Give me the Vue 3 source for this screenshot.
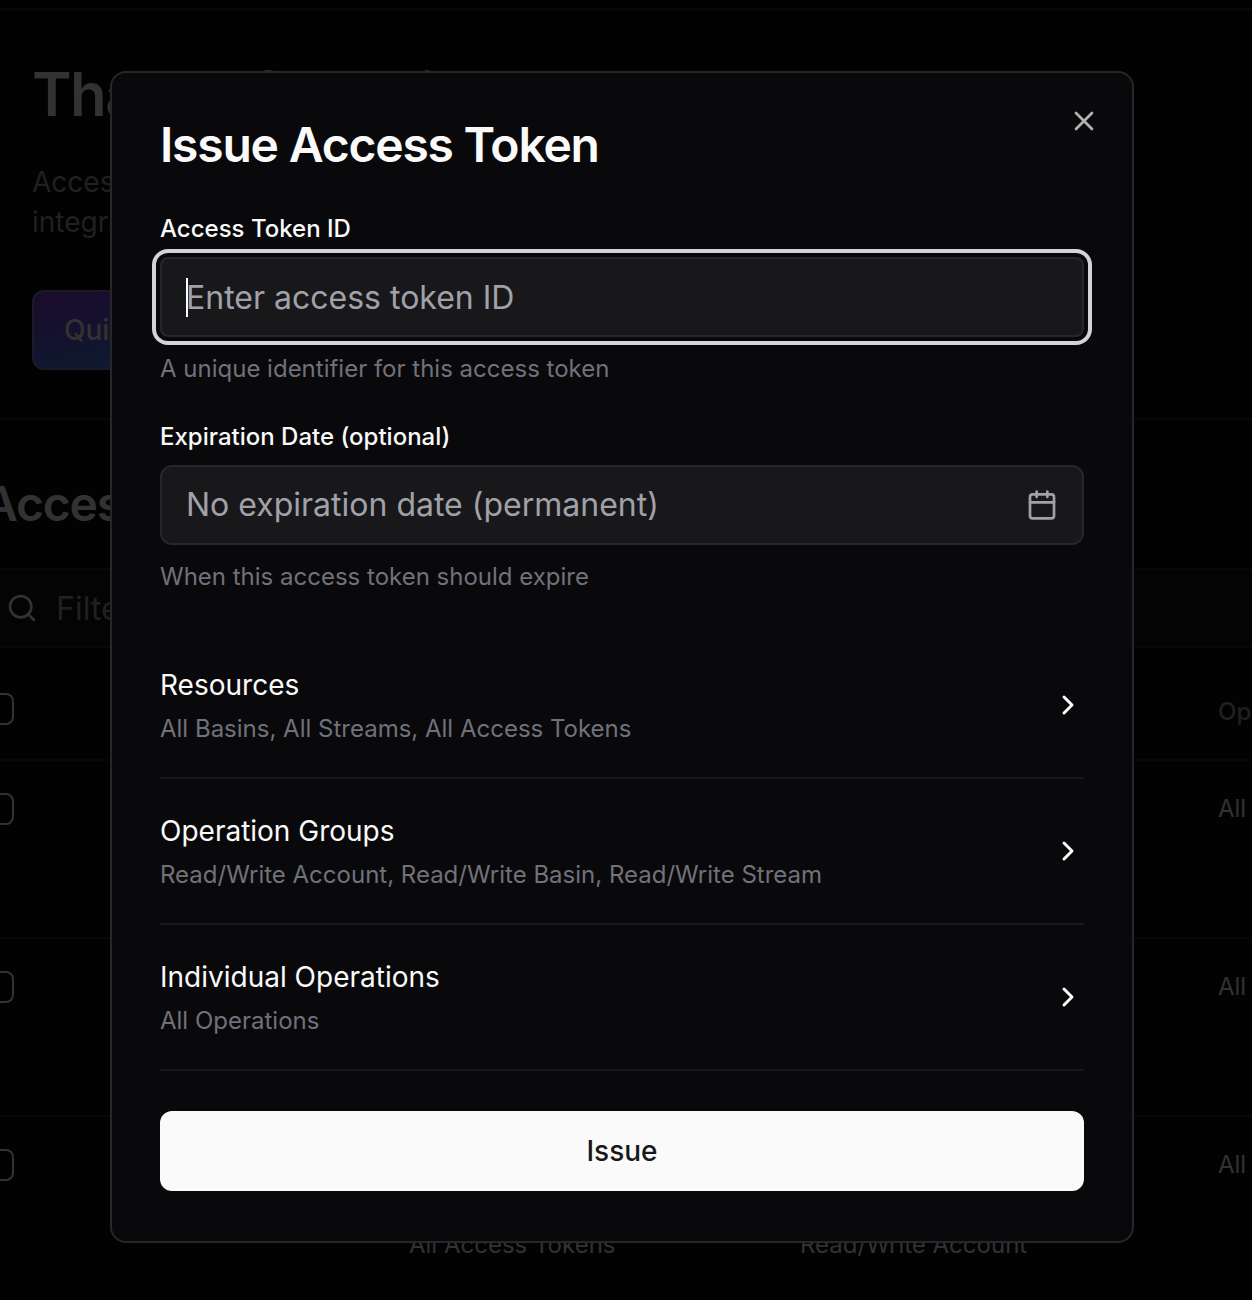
<script setup>
const rows = [1, 2, 3]
const basins = ['All Basins', 'All Streams', 'All Access Tokens']
const groups = ['Read/Write Stream', 'Read/Write Basin', 'Read/Write Account']
const sections = [
  { title: 'Resources', detail: 'All Basins, All Streams, All Access Tokens' },
  { title: 'Operation Groups', detail: 'Read/Write Account, Read/Write Basin, Read/Write Stream' },
  { title: 'Individual Operations', detail: 'All Operations' },
]
</script>

<template>
  <div class="screen">
    <main class="page">
      <section class="hero">
        <h1>Thanks for trying</h1>
        <p>Access tokens<br />integrate</p>
        <button class="quick">Quickstart</button>
      </section>
      <h2 class="heading">Access Tokens</h2>
      <div class="filter">
        <svg class="icon" viewBox="0 0 24 24"><circle cx="11" cy="11" r="8" /><path d="m21 21-4.3-4.3" /></svg>
        <span>Filter</span>
      </div>
      <div class="row head">
        <i class="box"></i>
        <span class="ops">Operations</span>
      </div>
      <div v-for="r in rows" :key="r" class="row">
        <i class="box"></i>
        <div class="res"><div v-for="b in basins" :key="b">{{ b }}</div></div>
        <div class="grp"><div v-for="g in groups" :key="g">{{ g }}</div></div>
        <div class="ops">All</div>
      </div>
    </main>

    <div class="modal" role="dialog">
      <button class="close" aria-label="Close">
        <svg class="icon" viewBox="0 0 24 24"><path d="M18 6 6 18" /><path d="m6 6 12 12" /></svg>
      </button>
      <h2 class="title">Issue Access Token</h2>
      <div class="field">
        <label>Access Token ID</label>
        <div class="input focused"><i class="caret"></i><span>Enter access token ID</span></div>
        <p>A unique identifier for this access token</p>
      </div>
      <div class="field">
        <label>Expiration Date (optional)</label>
        <div class="input date">
          <span>No expiration date (permanent)</span>
          <svg class="icon" viewBox="0 0 24 24">
            <path d="M8 2v4" /><path d="M16 2v4" /><rect width="18" height="18" x="3" y="4" rx="2" /><path d="M3 10h18" />
          </svg>
        </div>
        <p>When this access token should expire</p>
      </div>
      <div class="sections">
        <div v-for="s in sections" :key="s.title" class="section">
          <div>
            <div class="name">{{ s.title }}</div>
            <div class="detail">{{ s.detail }}</div>
          </div>
          <svg class="icon" viewBox="0 0 24 24"><path d="m9 18 6-6-6-6" /></svg>
        </div>
      </div>
      <button class="issue">Issue</button>
    </div>
  </div>
</template>

<style>
body { margin: 0; background: #020202; }
</style>

<style scoped>
* { box-sizing: border-box; }
h1, h2, p { margin: 0; }
button { font: inherit; border: 0; padding: 0; }
.screen {
  position: relative;
  width: 1252px;
  height: 1300px;
  overflow: hidden;
  background: #020202;
  font-family: Inter, sans-serif;
  color: #fafafa;
}
.icon {
  width: 32px;
  height: 32px;
  flex: none;
  display: block;
  fill: none;
  stroke: currentColor;
  stroke-width: 2;
  stroke-linecap: round;
  stroke-linejoin: round;
}

.page { padding-top: 8px; color: #323232; }
.hero {
  height: 412px;
  padding: 48px 32px 0;
  border-top: 2px solid #080808;
  border-bottom: 2px solid #080808;
}
.hero h1 { font-size: 60px; line-height: 72px; font-weight: 600; letter-spacing: -0.025em; white-space: nowrap; }
.hero p { margin-top: 32px; font-size: 28px; line-height: 40px; color: #202022; }
.quick {
  display: block;
  width: 220px;
  height: 80px;
  margin-top: 48px;
  padding-left: 30px;
  text-align: left;
  border: 2px solid #1c1a28;
  border-radius: 12px;
  background: linear-gradient(165deg, #1c0b2c, #13132e 45%, #0a2030 90%);
  color: #323232;
  font-size: 28px;
  font-weight: 500;
}
.heading {
  height: 148px;
  padding-top: 56px;
  margin-left: -17px;
  font-size: 48px;
  line-height: 56px;
  font-weight: 600;
  letter-spacing: -0.025em;
}
.filter {
  display: flex;
  align-items: center;
  gap: 18px;
  height: 80px;
  padding-left: 6px;
  border-top: 2px solid #080808;
  border-bottom: 2px solid #080808;
  background: #040404;
  font-size: 32px;
}
.filter span { color: #202022; }
.row {
  display: flex;
  height: 178px;
  padding-top: 28px;
  border-bottom: 2px solid #070707;
  font-size: 24px;
  line-height: 40px;
  white-space: nowrap;
}
.row:last-child { border-bottom: 0; }
.row.head { height: 113px; padding-top: 44px; font-weight: 500; color: #202022; }
.box { flex: none; width: 32px; height: 32px; margin: 4px 0 0 -18px; border: 2px solid #323232; border-radius: 8px; }
.head .box { margin-top: 1px; }
.res { width: 391px; margin-left: 395px; }
.ops { margin-left: auto; width: 34px; }

.modal {
  position: absolute;
  left: 110px;
  top: 71px;
  width: 1024px;
  height: 1172px;
  padding: 48px;
  border: 2px solid #27272a;
  border-radius: 16px;
  background: #09090b;
}
.close { position: absolute; top: 32px; right: 32px; background: none; color: #fafafa; opacity: 0.7; }
.title { font-size: 48px; line-height: 48px; font-weight: 600; letter-spacing: -0.025em; margin-bottom: 48px; }
.field { margin-bottom: 40px; }
.field label { display: block; font-size: 24px; line-height: 24px; font-weight: 500; margin-bottom: 16px; }
.field p { margin-top: 16px; font-size: 24px; line-height: 32px; color: #71717a; }
.input {
  position: relative;
  display: flex;
  align-items: center;
  justify-content: space-between;
  height: 80px;
  padding: 0 24px;
  border: 2px solid #27272a;
  border-radius: 12px;
  background: #18181b;
  color: #a1a1aa;
  font-size: 32px;
}
.focused { border-radius: 8px; box-shadow: 0 0 0 4px #09090b, 0 0 0 8px #d4d4d8; }
.date span { padding-bottom: 2px; }
.caret { position: absolute; left: 24px; top: 19px; width: 2px; height: 39px; background: #fff; }
.section {
  display: flex;
  align-items: center;
  justify-content: space-between;
  height: 146px;
  border-bottom: 2px solid #18181b;
}
.section .icon { stroke-width: 2.2; }
.name { font-size: 28px; line-height: 40px; }
.detail { margin-top: 8px; font-size: 24px; line-height: 32px; color: #71717a; }
.issue {
  display: block;
  width: 100%;
  height: 80px;
  margin-top: 40px;
  border-radius: 12px;
  background: #fafafa;
  color: #18181b;
  font-size: 28px;
  font-weight: 500;
}
</style>
